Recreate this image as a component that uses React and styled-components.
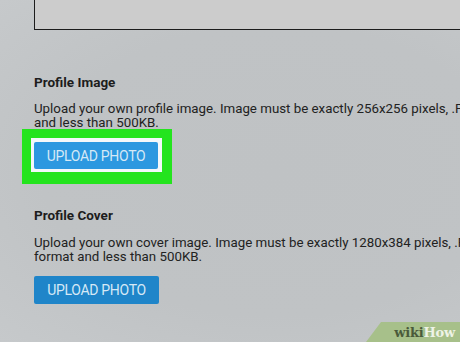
import React from 'react'
import styled, { createGlobalStyle } from 'styled-components'

const GlobalStyle = createGlobalStyle`
    html, body {
        margin: 0;
        padding: 0;
        width: 460px;
        height: 342px;
        overflow: hidden;
    }
    body {
        font-family: Roboto, 'Liberation Sans', sans-serif;
        background: #c0c3c5;
    }
`

const Page = styled.div`
    position: relative;
    width: 460px;
    height: 342px;
    overflow: hidden;
    background: radial-gradient(ellipse at 60% 50%, #bfc2c4 0%, #c0c3c5 60%, #c6c9cb 100%);
`

const Content = styled.div`
    display: flex;
    flex-direction: column;
    padding-left: 34px;
    width: 560px;
`

const TopBox = styled.div`
    height: 29px;
    border: 1px solid #1c1c1c;
    border-top: none;
    background: #cccccc;
    margin-bottom: 44px;
`

const Section = styled.section`
    display: flex;
    flex-direction: column;
    align-items: flex-start;
    margin-bottom: ${(p) => p.gap || 0}px;
`

const Heading = styled.h3`
    margin: 0 0 ${(p) => p.after || 12}px;
    font-size: 13.5px;
    font-weight: 700;
    line-height: 16px;
    color: #1d1d1d;
`

const Description = styled.p`
    margin: 0 0 ${(p) => p.after || 0}px;
    font-size: 13.3px;
    line-height: 13.5px;
    color: #222;
    white-space: pre;
`

const Highlight = styled.div`
    margin-left: -12px;
    padding: 9px 10px 12px 9px;
    background: #24e41e;
`

const Outline = styled.div`
    padding: 4px 4px 3px 3px;
    background: #f4f8fa;
`

const Button = styled.button`
    display: flex;
    align-items: center;
    justify-content: center;
    width: ${(p) => p.w || 125}px;
    height: ${(p) => p.h || 28}px;
    border: none;
    border-radius: 2px;
    background: ${(p) => (p.active ? '#2c98e0' : '#1f85c9')};
    color: #d6e9f6;
    font-family: Roboto, 'Liberation Sans', sans-serif;
    font-size: 14px;
    letter-spacing: -0.3px;
    padding: 0;
`

const Badge = styled.div`
    position: absolute;
    right: 0;
    bottom: 0;
    width: 94px;
    height: 20px;
    background: #a7c08a;
    clip-path: polygon(15px 0, 100% 0, 100% 100%, 0 100%);
    display: flex;
    align-items: center;
    justify-content: flex-end;
    padding-right: 5px;
    box-sizing: border-box;
    font-family: 'DejaVu Serif', 'Liberation Serif', serif;
    font-weight: 700;
    font-size: 13px;
    letter-spacing: -0.2px;
    color: #4a5a3a;
`

const BadgeHow = styled.span`
    color: #eef3e6;
`

export default function App() {
    return (
        <Page>
            <GlobalStyle />
            <Content>
                <TopBox />
                <Section gap={23}>
                    <Heading>Profile Image</Heading>
                    <Description>
                        {'Upload your own profile image. Image must be exactly 256x256 pixels, .PNG\nand less than 500KB.'}
                    </Description>
                    <Highlight>
                        <Outline>
                            <Button active w={124} h={27}>UPLOAD PHOTO</Button>
                        </Outline>
                    </Highlight>
                </Section>
                <Section>
                    <Heading after={13}>Profile Cover</Heading>
                    <Description after={13}>
                        {'Upload your own cover image. Image must be exactly 1280x384 pixels, .PNG\nformat and less than 500KB.'}
                    </Description>
                    <Button>UPLOAD PHOTO</Button>
                </Section>
            </Content>
            <Badge>
                wiki<BadgeHow>How</BadgeHow>
            </Badge>
        </Page>
    )
}
